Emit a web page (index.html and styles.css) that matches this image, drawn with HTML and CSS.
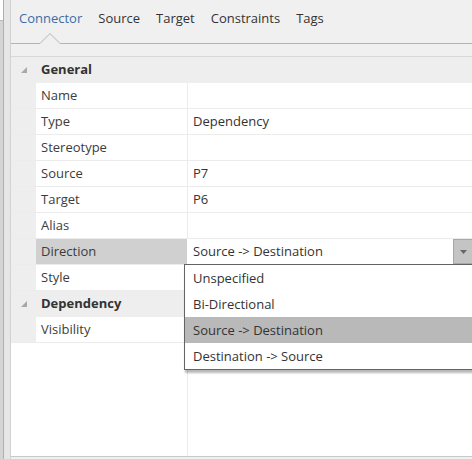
FILE: index.html
```html
<!DOCTYPE html>
<html>
<head>
<meta charset="utf-8">
<link rel="stylesheet" href="styles.css">
</head>
<body>
<div class="app">
  <div class="strip">
    <div class="strip-a"><div class="strip-box"></div></div>
    <div class="strip-b"></div>
  </div>
  <div class="main">
    <div class="tabs">
      <span class="tab active">Connector</span>
      <span class="tab">Source</span>
      <span class="tab">Target</span>
      <span class="tab">Constraints</span>
      <span class="tab">Tags</span>
    </div>
    <svg class="tabline" width="461" height="11" viewBox="0 0 461 11">
      <polyline points="0,10.5 29,10.5 39,0.5 49,10.5 461,10.5" fill="none" stroke="#b4b4b4" stroke-width="1"/>
    </svg>
    <div class="band"></div>
    <div class="grid">
      <div class="row group">
        <div class="gut"><svg width="6" height="6" viewBox="0 0 6 6"><polygon points="6,0 6,6 0,6" fill="#a8a8a8"/></svg></div>
        <div class="glabel">General</div>
      </div>
      <div class="row"><div class="gut"></div><div class="name">Name</div><div class="val"></div></div>
      <div class="row"><div class="gut"></div><div class="name">Type</div><div class="val">Dependency</div></div>
      <div class="row"><div class="gut"></div><div class="name">Stereotype</div><div class="val"></div></div>
      <div class="row"><div class="gut"></div><div class="name">Source</div><div class="val">P7</div></div>
      <div class="row"><div class="gut"></div><div class="name">Target</div><div class="val">P6</div></div>
      <div class="row"><div class="gut"></div><div class="name">Alias</div><div class="val"></div></div>
      <div class="row"><div class="gut"></div><div class="name sel">Direction</div><div class="val combo"><span>Source -&gt; Destination</span><span class="dd"><svg width="7" height="4" viewBox="0 0 7 4"><polygon points="0,0 7,0 3.5,4" fill="#666"/></svg></span></div></div>
      <div class="row"><div class="gut"></div><div class="name">Style</div><div class="val"></div></div>
      <div class="row group">
        <div class="gut"><svg width="6" height="6" viewBox="0 0 6 6"><polygon points="6,0 6,6 0,6" fill="#a8a8a8"/></svg></div>
        <div class="glabel">Dependency</div>
      </div>
      <div class="row"><div class="gut"></div><div class="name">Visibility</div><div class="val"></div></div>
      <div class="rest"><div class="rest-l"></div><div class="rest-r"></div></div>
      <div class="popup">
        <div class="opt">Unspecified</div>
        <div class="opt">Bi-Directional</div>
        <div class="opt hi">Source -&gt; Destination</div>
        <div class="opt">Destination -&gt; Source</div>
      </div>
    </div>
  </div>
</div>
</body>
</html>
```

FILE: styles.css
```css
html, body {
  margin: 0;
  padding: 0;
}
body {
  width: 472px;
  height: 459px;
  overflow: hidden;
  background: #f0f0f0;
  font-family: "Open Sans", "Noto Sans", sans-serif;
  font-size: 13px;
  color: #333333;
}
.app {
  display: flex;
  height: 459px;
}
.strip {
  display: flex;
  width: 11px;
  flex: none;
}
.strip-a {
  width: 3px;
  background: #d4d4d4;
  border-right: 1px solid #b0b0b0;
}
.strip-box {
  height: 20px;
  background: #ffffff;
  border-bottom: 1px solid #b8b8b8;
}
.strip-b {
  width: 6px;
  background: #e6e6e6;
  border-right: 1px solid #d2d2d2;
}
.main {
  flex: 1;
  display: flex;
  flex-direction: column;
  min-width: 0;
}
.tabs {
  height: 33px;
  display: flex;
  gap: 16px;
  padding-left: 8px;
  align-items: flex-start;
}
.tab {
  line-height: 18px;
  padding-top: 9px;
  color: #333333;
  white-space: nowrap;
}
.tab.active {
  color: #3e6da3;
}
.tabline {
  display: block;
}
.band {
  height: 12px;
}
.grid {
  position: relative;
  flex: 1;
  display: flex;
  flex-direction: column;
  background: #ffffff;
  border-top: 1px solid #d8d8d8;
  border-bottom: 1px solid #c8c8c8;
  margin-bottom: 2px;
}
.row {
  display: flex;
  height: 25px;
  border-bottom: 1px solid #ececec;
  flex: none;
}
.row.group {
  background: #eeeeee;
  border-bottom-color: #eeeeee;
}
.gut {
  width: 25px;
  flex: none;
  background: #eeeeee;
  display: flex;
  align-items: center;
  justify-content: flex-start;
  padding-left: 10px;
  box-sizing: border-box;
}
.gut svg {
  display: block;
  margin-top: 1px;
}
.glabel {
  padding-left: 5px;
  line-height: 25px;
  font-weight: bold;
  color: #333333;
}
.name {
  width: 152px;
  box-sizing: border-box;
  flex: none;
  padding-left: 5px;
  line-height: 25px;
  border-right: 1px solid #ececec;
  color: #3c3c3c;
}
.name.sel {
  background: #d0d0d0;
  border-right-color: #ffffff;
}
.val {
  flex: 1;
  padding-left: 5px;
  line-height: 25px;
  color: #333333;
}
.combo {
  display: flex;
  justify-content: space-between;
  padding-right: 0;
}
.dd {
  width: 18px;
  height: 23px;
  background: #c4c4c4;
  border: 1px solid #a8a8a8;
  border-right: none;
  display: flex;
  align-items: center;
  justify-content: center;
}
.rest {
  flex: 1;
  display: flex;
}
.rest-l {
  width: 176px;
  border-right: 1px solid #ececec;
}
.rest-r {
  flex: 1;
}
.popup {
  position: absolute;
  left: 173px;
  top: 207px;
  width: 300px;
  background: #ffffff;
  border: 1px solid #646464;
  box-shadow: 1px 3px 2px rgba(0, 0, 0, 0.28);
}
.opt {
  height: 26px;
  line-height: 26px;
  padding-left: 8px;
  color: #333333;
}
.opt.hi {
  background: #b9b9b9;
}
```
